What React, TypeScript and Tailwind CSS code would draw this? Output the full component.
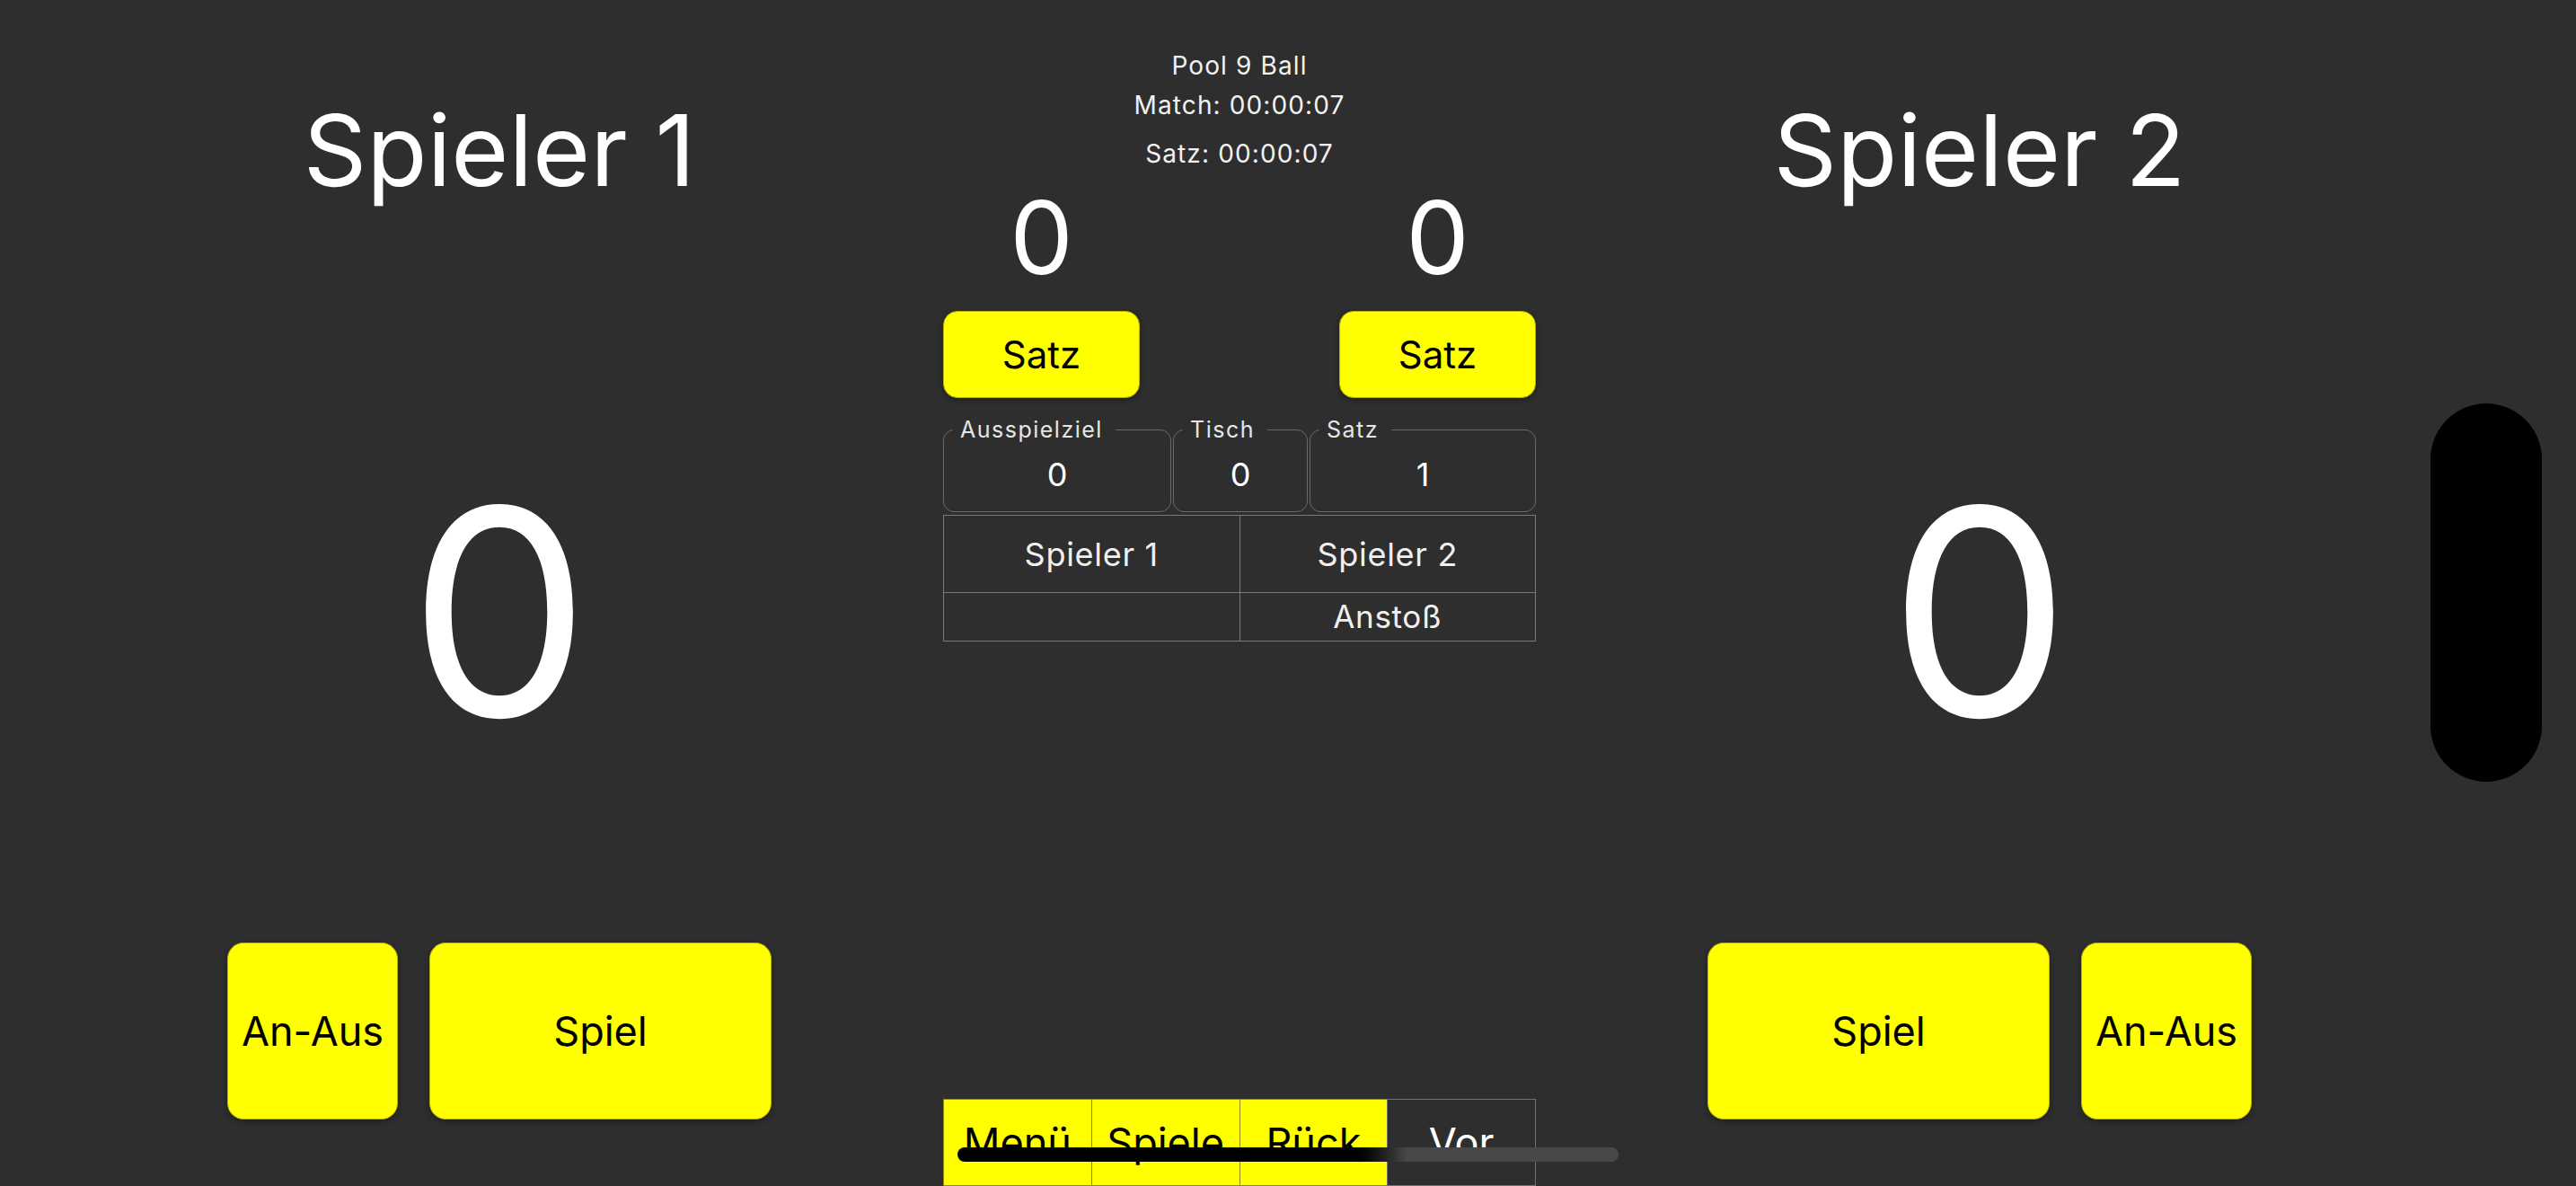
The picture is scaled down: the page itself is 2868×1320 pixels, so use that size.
import React from "react";

const yellowBtn =
  "flex items-center justify-center bg-[#ffff00] text-black leading-none border border-[#b5b500] shadow-[0_2px_6px_rgba(0,0,0,0.35)]";

function PlayerPanel({ name, side }: { name: string; side: "left" | "right" }) {
  const onOff = (
    <button className={`${yellowBtn} h-[197px] w-[190px] rounded-[18px] text-[45px]`}>An-Aus</button>
  );
  const game = (
    <button className={`${yellowBtn} h-[197px] w-[381px] rounded-[18px] text-[45px]`}>Spiel</button>
  );

  return (
    <div className="flex w-[988px] flex-col items-center text-white">
      <div className="mt-[112px] text-[110px] leading-none">{name}</div>
      <div className="mt-[299px] text-[320px] leading-none">0</div>
      <div className="mt-[208px] flex gap-[35px]">
        {side === "left" ? (
          <>
            {onOff}
            {game}
          </>
        ) : (
          <>
            {game}
            {onOff}
          </>
        )}
      </div>
    </div>
  );
}

function InfoBox({ label, value, className }: { label: string; value: string; className: string }) {
  return (
    <fieldset className={`${className} rounded-[12px] border border-[#6a6a6a] pb-[23px] pt-[19px] text-left`}>
      <legend className="ml-[10px] pl-[8px] pr-[14px] text-left text-[25px] leading-none tracking-[0.06em] text-[#e6e6e6]">
        {label}
      </legend>
      <div className="text-center text-[36px] leading-none text-white">{value}</div>
    </fieldset>
  );
}

const navItems = [
  { label: "Menü", active: true },
  { label: "Spiele", active: true },
  { label: "Rück", active: true },
  { label: "Vor", active: false },
];

export default function App() {
  return (
    <div className="relative flex h-[1320px] w-full overflow-hidden bg-[#2e2e2e] pl-[62px] font-['Inter',sans-serif]">
      <PlayerPanel name="Spieler 1" side="left" />

      {/* Mitte */}
      <div className="flex w-[660px] flex-col text-white">
        <div className="mt-[59px] flex flex-col items-center text-[28px] leading-none tracking-[0.04em] text-[#f2f2f2]">
          <div>Pool 9 Ball</div>
          <div className="mt-[16px]">Match: 00:00:07</div>
          <div className="mt-[26px]">Satz: 00:00:07</div>
        </div>

        <div className="mt-[23px] flex justify-between">
          {[0, 1].map((i) => (
            <div key={i} className="flex w-[219px] flex-col items-center">
              <div className="text-[112px] leading-none">0</div>
              <button className={`${yellowBtn} mt-[26px] h-[97px] w-full rounded-[16px] text-[42px]`}>Satz</button>
            </div>
          ))}
        </div>

        <div className="mt-[23px] flex gap-[2px]">
          <InfoBox label="Ausspielziel" value="0" className="w-[254px]" />
          <InfoBox label="Tisch" value="0" className="w-[150px]" />
          <InfoBox label="Satz" value="1" className="flex-1" />
        </div>

        <div className="mt-[3px] grid grid-cols-2 border-l border-t border-[#7a7a7a] text-center leading-none text-[#f0f0f0]">
          <div className="flex h-[86px] items-center justify-center border-b border-r border-[#7a7a7a] text-[36px] tracking-[0.02em]">
            Spieler 1
          </div>
          <div className="flex h-[86px] items-center justify-center border-b border-r border-[#7a7a7a] text-[36px] tracking-[0.02em]">
            Spieler 2
          </div>
          <div className="h-[54px] border-b border-r border-[#7a7a7a]" />
          <div className="flex h-[54px] items-center justify-center border-b border-r border-[#7a7a7a] text-[35px] tracking-[0.02em]">
            Anstoß
          </div>
        </div>

        <div className="flex-1" />

        <div className="flex h-[97px]">
          {navItems.map((item) =>
            item.active ? (
              <button
                key={item.label}
                className="flex flex-1 items-center justify-center border border-r-0 border-[#8c8c00] bg-[#ffff00] text-[45px] leading-none text-black"
              >
                {item.label}
              </button>
            ) : (
              <button
                key={item.label}
                className="flex flex-1 items-center justify-center border border-[#707070] bg-[#2e2e2e] text-[45px] leading-none text-white"
              >
                {item.label}
              </button>
            )
          )}
        </div>
      </div>

      <PlayerPanel name="Spieler 2" side="right" />

      {/* Dynamic Island */}
      <div className="absolute left-[2706px] top-[449px] h-[421px] w-[124px] rounded-full bg-black" />

      {/* Home-Indikator */}
      <div className="absolute left-[1066px] top-[1277px] h-[16px] w-[736px] rounded-full bg-linear-to-r from-black from-59% to-[#484848] to-68%" />
    </div>
  );
}
